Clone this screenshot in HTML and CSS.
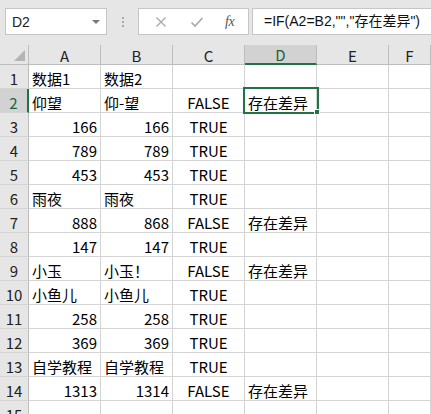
FILE: index.html
```html
<!DOCTYPE html>
<html lang="zh">
<head>
<meta charset="utf-8">
<link rel="stylesheet" href="styles.css">
</head>
<body>
<div class="app">
  <div class="topbar">
    <div class="namebox">
      <span class="name">D2</span>
      <span class="caret"></span>
    </div>
    <div class="grip"><i></i><i></i><i></i></div>
    <div class="fxbox">
      <svg class="ico" width="12" height="12" viewBox="0 0 12 12"><path d="M1.5 1.5 L10.5 10.5 M10.5 1.5 L1.5 10.5" stroke="#a8a8a8" stroke-width="1.3" fill="none"/></svg>
      <svg class="ico" width="14" height="12" viewBox="0 0 14 12"><path d="M1.5 6.5 L5 10 L12.5 2" stroke="#a8a8a8" stroke-width="1.6" fill="none"/></svg>
      <span class="fx">fx</span>
    </div>
    <div class="formula">=IF(A2=B2,"","存在差异")</div>
  </div>
  <div class="sheet">
    <div class="corner"><span class="tri"></span></div>
    <div class="ch">A</div><div class="ch">B</div><div class="ch">C</div><div class="ch sel">D</div><div class="ch">E</div><div class="ch">F</div>

    <div class="rh">1</div><div class="c">数据1</div><div class="c">数据2</div><div class="c"></div><div class="c"></div><div class="c"></div><div class="c"></div>
    <div class="rh sel">2</div><div class="c">仰望</div><div class="c">仰-望</div><div class="c m">FALSE</div><div class="c">存在差异</div><div class="c"></div><div class="c"></div>
    <div class="rh">3</div><div class="c r">166</div><div class="c r">166</div><div class="c m">TRUE</div><div class="c"></div><div class="c"></div><div class="c"></div>
    <div class="rh">4</div><div class="c r">789</div><div class="c r">789</div><div class="c m">TRUE</div><div class="c"></div><div class="c"></div><div class="c"></div>
    <div class="rh">5</div><div class="c r">453</div><div class="c r">453</div><div class="c m">TRUE</div><div class="c"></div><div class="c"></div><div class="c"></div>
    <div class="rh">6</div><div class="c">雨夜</div><div class="c">雨夜</div><div class="c m">TRUE</div><div class="c"></div><div class="c"></div><div class="c"></div>
    <div class="rh">7</div><div class="c r">888</div><div class="c r">868</div><div class="c m">FALSE</div><div class="c">存在差异</div><div class="c"></div><div class="c"></div>
    <div class="rh">8</div><div class="c r">147</div><div class="c r">147</div><div class="c m">TRUE</div><div class="c"></div><div class="c"></div><div class="c"></div>
    <div class="rh">9</div><div class="c">小玉</div><div class="c">小玉！</div><div class="c m">FALSE</div><div class="c">存在差异</div><div class="c"></div><div class="c"></div>
    <div class="rh">10</div><div class="c">小鱼儿</div><div class="c">小鱼儿</div><div class="c m">TRUE</div><div class="c"></div><div class="c"></div><div class="c"></div>
    <div class="rh">11</div><div class="c r">258</div><div class="c r">258</div><div class="c m">TRUE</div><div class="c"></div><div class="c"></div><div class="c"></div>
    <div class="rh">12</div><div class="c r">369</div><div class="c r">369</div><div class="c m">TRUE</div><div class="c"></div><div class="c"></div><div class="c"></div>
    <div class="rh">13</div><div class="c">自学教程</div><div class="c">自学教程</div><div class="c m">TRUE</div><div class="c"></div><div class="c"></div><div class="c"></div>
    <div class="rh">14</div><div class="c r">1313</div><div class="c r">1314</div><div class="c m">FALSE</div><div class="c">存在差异</div><div class="c"></div><div class="c"></div>
    <div class="rh">15</div><div class="c"></div><div class="c"></div><div class="c"></div><div class="c"></div><div class="c"></div><div class="c"></div>

    <div class="selection"><span class="handle"></span></div>
  </div>
</div>
</body>
</html>
```

FILE: styles.css
```css
html, body {
  margin: 0;
  padding: 0;
  background: #ffffff;
  overflow: hidden;
}
.app {
  width: 431px;
  height: 414px;
  overflow: hidden;
  font-family: "Noto Sans CJK SC", "Liberation Sans", sans-serif;
  font-size: 15px;
  color: #000;
}
.topbar {
  height: 45px;
  background: #e6e6e6;
  display: flex;
  align-items: flex-start;
  padding: 8px 0 0 5px;
  box-sizing: border-box;
}
.namebox {
  width: 102px;
  height: 27px;
  box-sizing: border-box;
  background: #fff;
  border: 1px solid #c6c6c6;
  display: flex;
  align-items: center;
  justify-content: space-between;
  padding: 0 6px 0 6px;
  font-family: "Liberation Sans", sans-serif;
  font-size: 14px;
  line-height: 18px;
  color: #222;
}
.caret {
  width: 0;
  height: 0;
  border-left: 4px solid transparent;
  border-right: 4px solid transparent;
  border-top: 4px solid #7a7a7a;
  margin-top: 1px;
}
.grip {
  width: 31px;
  height: 27px;
  display: flex;
  flex-direction: column;
  align-items: center;
  justify-content: center;
  gap: 2px;
}
.grip i {
  display: block;
  width: 2px;
  height: 2px;
  background: #a9a9a9;
}
.fxbox {
  width: 111px;
  height: 27px;
  box-sizing: border-box;
  background: #fff;
  border: 1px solid #c6c6c6;
  display: flex;
  align-items: center;
  padding: 0 0 0 16px;
  gap: 23px;
}
.fx {
  font-family: "Liberation Serif", serif;
  font-style: italic;
  font-size: 14px;
  color: #555;
  margin-left: -2px;
  letter-spacing: -0.5px;
}
.formula {
  margin-left: 3px;
  flex: 1;
  height: 27px;
  box-sizing: border-box;
  background: #fff;
  border: 1px solid #c6c6c6;
  border-right: none;
  padding-left: 11px;
  font-family: "Liberation Sans", "Noto Sans CJK SC", sans-serif;
  font-size: 14px;
  line-height: 25px;
  white-space: nowrap;
  color: #111;
}
.sheet {
  position: relative;
  display: grid;
  grid-template-columns: 29px repeat(5, 72px) 1fr;
  grid-template-rows: 20px;
  grid-auto-rows: 24px;
}
.sheet > div {
  box-sizing: border-box;
  border-right: 1px solid #d4d4d4;
  border-bottom: 1px solid #d4d4d4;
  line-height: 18px;
  white-space: nowrap;
}
.sheet > .corner {
  background: #e6e6e6;
  border-right: 1px solid #bdbdbd;
  border-bottom: 1px solid #bdbdbd;
  position: relative;
}
.tri {
  position: absolute;
  right: 3px;
  bottom: 3px;
  width: 0;
  height: 0;
  border-left: 11px solid transparent;
  border-bottom: 11px solid #b4b4b4;
}
.sheet > .ch {
  background: #e6e6e6;
  border-right: 1px solid #bdbdbd;
  border-bottom: 1px solid #bdbdbd;
  display: flex;
  align-items: flex-end;
  justify-content: center;
  line-height: 17px;
  color: #222;
}
.sheet > .ch.sel {
  background: #d2d2d2;
  border-bottom: 2px solid #217346;
  color: #1f5f3c;
}
.sheet > .rh {
  background: #e6e6e6;
  border-right: 1px solid #bdbdbd;
  border-bottom: 1px solid #d4d4d4;
  display: flex;
  align-items: flex-end;
  justify-content: center;
  color: #222;
  overflow: hidden;
}
.sheet > .rh.sel {
  background: #d2d2d2;
  border-right: 2px solid #217346;
  color: #1f5f3c;
}
.sheet > .c {
  display: flex;
  align-items: flex-end;
  padding: 0 3px;
  overflow: hidden;
}
.sheet > .c.r {
  justify-content: flex-end;
}
.sheet > .c.m {
  justify-content: center;
}
.sheet > .selection {
  position: absolute;
  left: 243px;
  top: 42px;
  width: 76px;
  height: 27px;
  box-sizing: border-box;
  border: 2px solid #217346;
  overflow: visible;
}
.handle {
  position: absolute;
  right: -3px;
  bottom: -3px;
  width: 6px;
  height: 6px;
  box-sizing: border-box;
  background: #217346;
  border: 1px solid #fff;
}
```
